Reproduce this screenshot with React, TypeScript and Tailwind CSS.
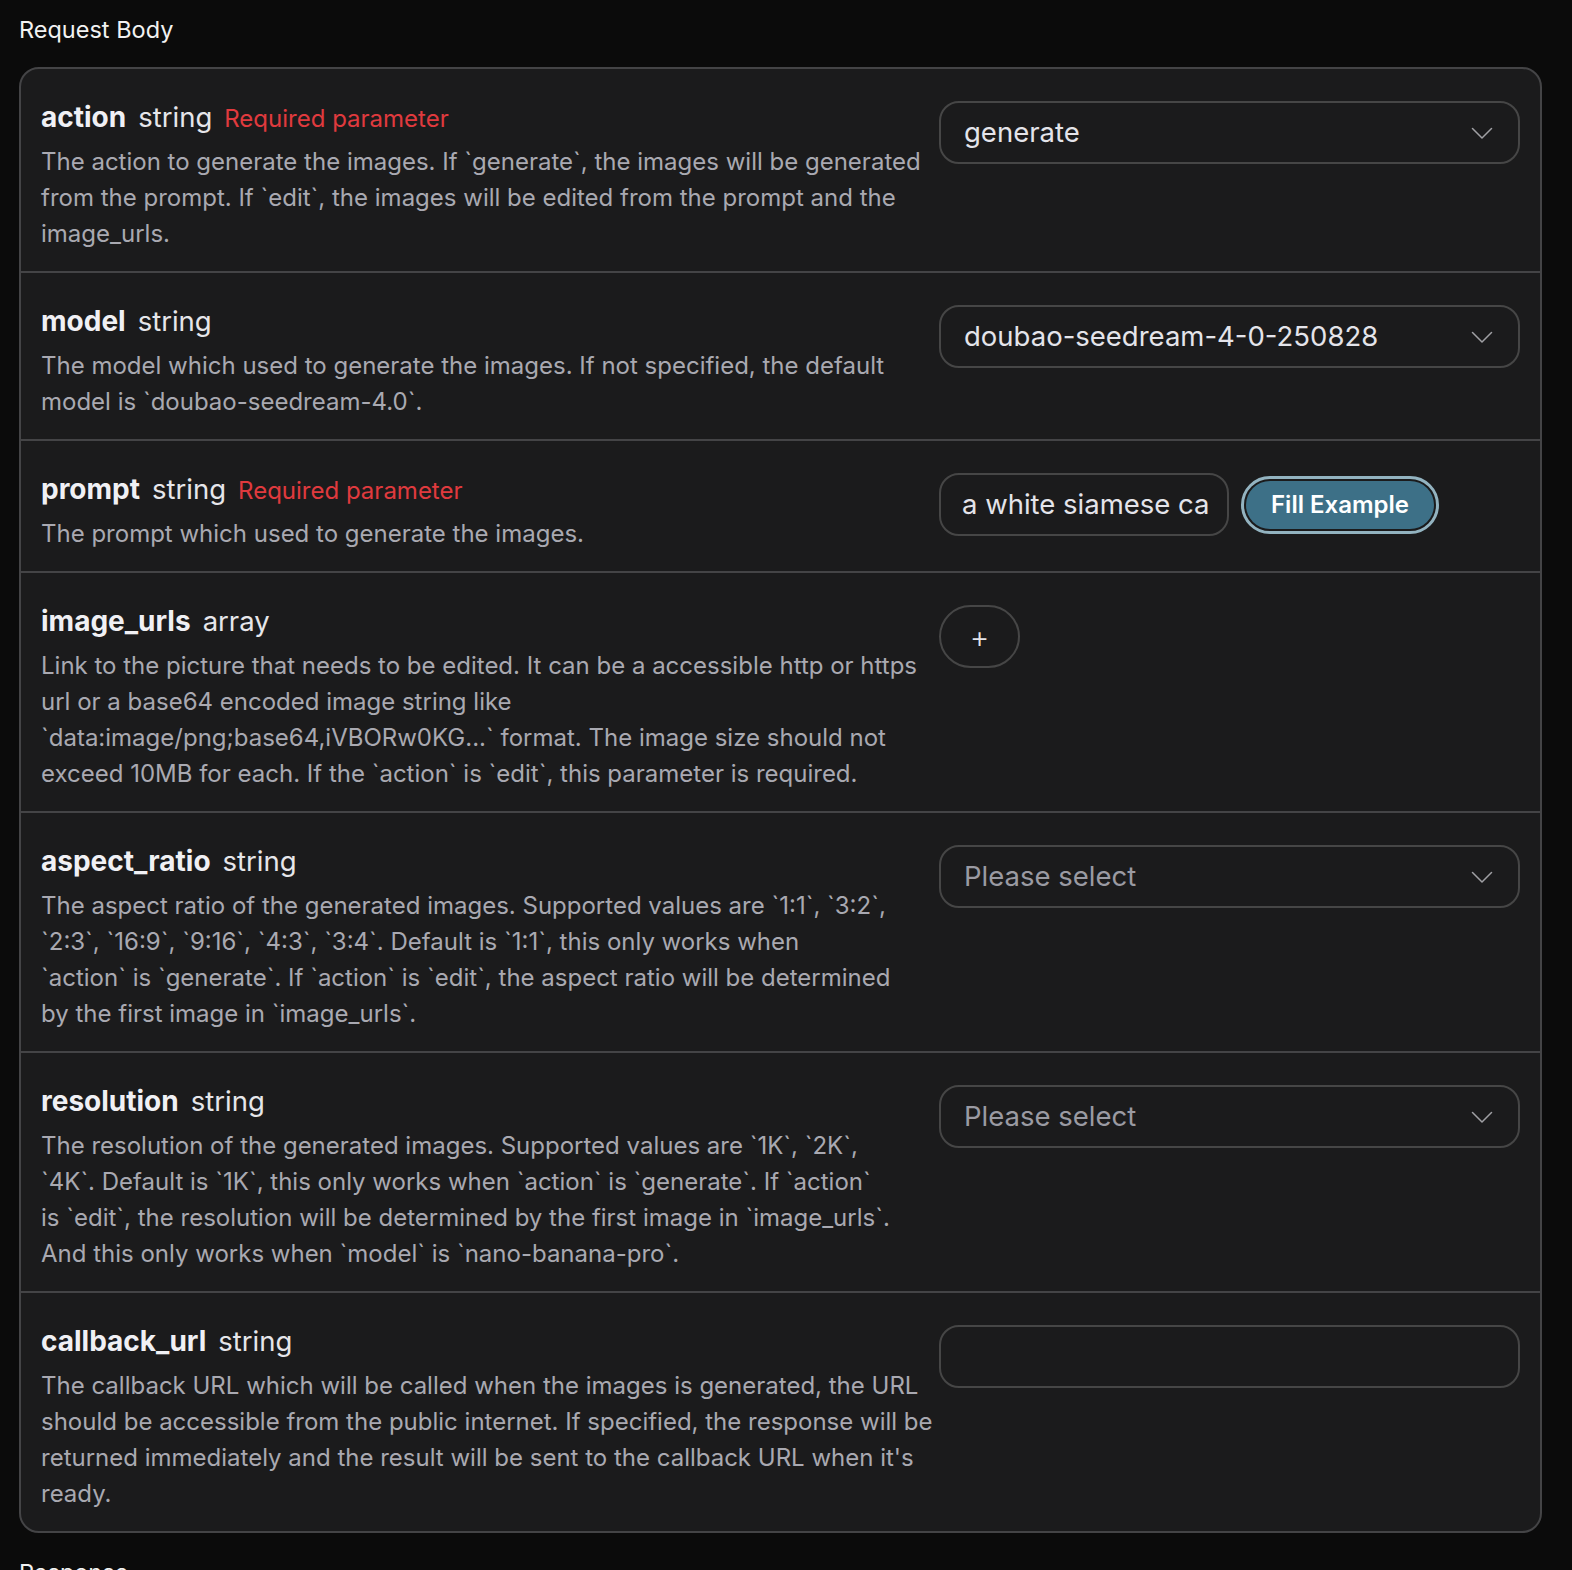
type Param = {
  name: string;
  type: string;
  required?: boolean;
  lines: string[];
  control: "select" | "prompt" | "add" | "input";
  value?: string;
};

const params: Param[] = [
  {
    name: "action",
    type: "string",
    required: true,
    lines: [
      "The action to generate the images. If `generate`, the images will be generated",
      "from the prompt. If `edit`, the images will be edited from the prompt and the",
      "image_urls.",
    ],
    control: "select",
    value: "generate",
  },
  {
    name: "model",
    type: "string",
    lines: [
      "The model which used to generate the images. If not specified, the default",
      "model is `doubao-seedream-4.0`.",
    ],
    control: "select",
    value: "doubao-seedream-4-0-250828",
  },
  {
    name: "prompt",
    type: "string",
    required: true,
    lines: ["The prompt which used to generate the images."],
    control: "prompt",
  },
  {
    name: "image_urls",
    type: "array",
    lines: [
      "Link to the picture that needs to be edited. It can be a accessible http or https",
      "url or a base64 encoded image string like",
      "`data:image/png;base64,iVBORw0KG...` format. The image size should not",
      "exceed 10MB for each. If the `action` is `edit`, this parameter is required.",
    ],
    control: "add",
  },
  {
    name: "aspect_ratio",
    type: "string",
    lines: [
      "The aspect ratio of the generated images. Supported values are `1:1`, `3:2`,",
      "`2:3`, `16:9`, `9:16`, `4:3`, `3:4`. Default is `1:1`, this only works when",
      "`action` is `generate`. If `action` is `edit`, the aspect ratio will be determined",
      "by the first image in `image_urls`.",
    ],
    control: "select",
  },
  {
    name: "resolution",
    type: "string",
    lines: [
      "The resolution of the generated images. Supported values are `1K`, `2K`,",
      "`4K`. Default is `1K`, this only works when `action` is `generate`. If `action`",
      "is `edit`, the resolution will be determined by the first image in `image_urls`.",
      "And this only works when `model` is `nano-banana-pro`.",
    ],
    control: "select",
  },
  {
    name: "callback_url",
    type: "string",
    lines: [
      "The callback URL which will be called when the images is generated, the URL",
      "should be accessible from the public internet. If specified, the response will be",
      "returned immediately and the result will be sent to the callback URL when it's",
      "ready.",
    ],
    control: "input",
  },
];

function Chevron() {
  return (
    <svg width="22" height="12" viewBox="0 0 22 12" fill="none" className="shrink-0">
      <path d="M1.5 1.5l9.5 9.5 9.5-9.5" stroke="#a0a0a4" strokeWidth="1.5" strokeLinecap="round" strokeLinejoin="round" />
    </svg>
  );
}

function Control({ p }: { p: Param }) {
  if (p.control === "select") {
    return (
      <div className="flex h-[63px] w-full items-center justify-between rounded-[20px] border-2 border-[#464646] bg-[#1b1b1c] pl-[23px] pr-[25px]">
        <span
          className={
            p.value
              ? "text-[27.5px] text-[#e4e4ea]"
              : "text-[27.5px] text-[#9a9aa2]"
          }
        >
          {p.value ?? "Please select"}
        </span>
        <Chevron />
      </div>
    );
  }
  if (p.control === "prompt") {
    return (
      <div className="flex items-center gap-3">
        <div className="flex h-[63px] w-[290px] items-center rounded-[20px] border-2 border-[#464646] pl-[21px] pr-[18px]">
          <div className="min-w-0 flex-1 overflow-hidden whitespace-nowrap text-[27.5px] text-[#e4e4ea]">
            a white siamese cat
          </div>
        </div>
        <button className="h-[58px] rounded-full border-[3px] border-[#93b3c0] p-[2px]">
          <span className="flex h-full items-center rounded-full bg-[#3d7087] px-[25px] text-[24px] font-semibold text-white">
            Fill Example
          </span>
        </button>
      </div>
    );
  }
  if (p.control === "add") {
    return (
      <button className="flex h-[63px] w-[81px] items-center justify-center rounded-full border-2 border-[#464646] text-[30px] font-light leading-none text-[#e4e4ea]">
        +
      </button>
    );
  }
  return (
    <div className="h-[63px] w-full rounded-[20px] border-2 border-[#464646]" />
  );
}

export default function App() {
  return (
    <main className="min-h-screen bg-[#0b0b0b] pb-10 font-['Inter',sans-serif]">
      <h2 className="pl-[19px] pt-[14px] text-[23.5px] leading-[32px] text-[#f2f2f2]">
        Request Body
      </h2>
      <section className="ml-[19px] mt-[21px] w-[1523px] overflow-hidden rounded-[20px] border-2 border-[#444446] bg-[#1b1b1c]">
        {params.map((p, i) => (
          <div
            key={p.name}
            className={
              i === 0
                ? "flex gap-3 pb-[19px] pl-5 pr-5 pt-8"
                : "flex gap-3 border-t-2 border-[#444446] pb-[19px] pl-5 pr-5 pt-8"
            }
          >
            <div className="min-w-0 flex-1">
              <div className="flex h-8 items-baseline gap-3 leading-[32px]">
                <span className="text-[28px] font-bold leading-[32px] text-[#f0f0f4]">
                  {p.name}
                </span>
                <span className="text-[27.5px] leading-[32px] text-[#e6e6ea]">
                  {p.type}
                </span>
                {p.required && (
                  <span className="text-[24px] leading-[32px] text-[#e03a3e]">
                    Required parameter
                  </span>
                )}
              </div>
              <p className="mt-[11px] text-[24px] leading-[36px] text-[#a9a9b1]">
                {p.lines.map((l) => (
                  <span key={l} className="block whitespace-nowrap">
                    {l}
                  </span>
                ))}
              </p>
            </div>
            <div className="w-[581px] shrink-0">
              <Control p={p} />
            </div>
          </div>
        ))}
      </section>
      <h2 className="pl-[19px] pt-[24px] text-[23.5px] leading-[32px] text-[#f2f2f2]">
        Response
      </h2>
    </main>
  );
}
